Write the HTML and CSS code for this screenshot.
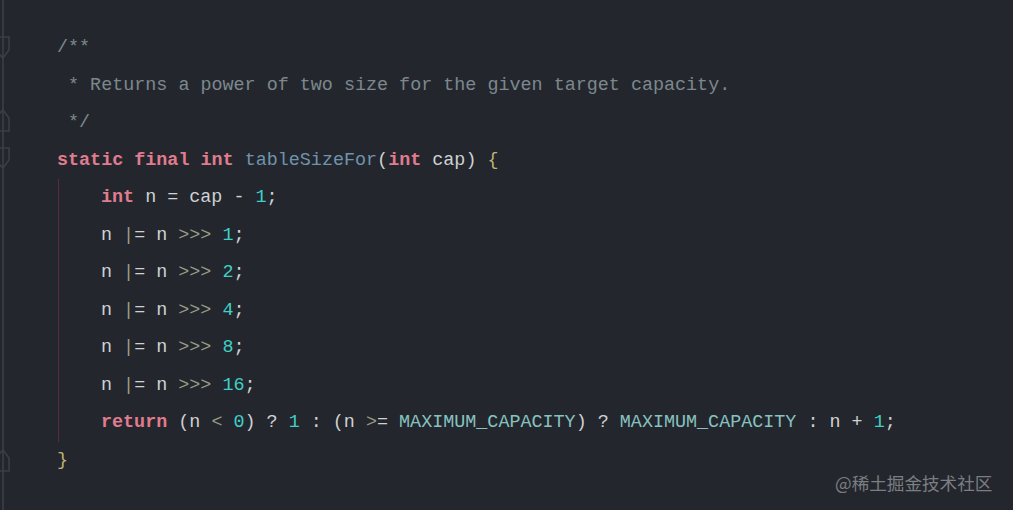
FILE: index.html
```html
<!DOCTYPE html>
<html>
<head>
<meta charset="utf-8">
<link rel="stylesheet" href="styles.css">
</head>
<body>
<div class="editor">
  <div class="gutter">
    <svg width="12" height="510" viewBox="0 0 12 510">
      <g fill="none" stroke="#3a3f47" stroke-width="1.6">
        <line x1="3" y1="0" x2="3" y2="510"/>
        <path d="M-2 37 H9 V50 L3 58 L-2 53"/>
        <path d="M-2 131 H9 V118 L3 110 L-2 115"/>
        <path d="M-2 148 H9 V160 L3 168 L-2 163"/>
        <path d="M-2 471 H9 V458 L3 450 L-2 455"/>
      </g>
    </svg>
  </div>
  <div class="code">
    <div class="line"><span class="cm">/**</span></div>
    <div class="line"><span class="cm"> * Returns a power of two size for the given target capacity.</span></div>
    <div class="line"><span class="cm"> */</span></div>
    <div class="line"><span class="kw">static</span> <span class="kw">final</span> <span class="kw">int</span> <span class="fn">tableSizeFor</span>(<span class="kw">int</span> cap) <span class="br">{</span></div>
    <div class="body">
      <div class="line"><span class="kw">int</span> n = cap - <span class="num">1</span>;</div>
      <div class="line">n <span class="op">|</span>= n <span class="op">&gt;&gt;&gt;</span> <span class="num">1</span>;</div>
      <div class="line">n <span class="op">|</span>= n <span class="op">&gt;&gt;&gt;</span> <span class="num">2</span>;</div>
      <div class="line">n <span class="op">|</span>= n <span class="op">&gt;&gt;&gt;</span> <span class="num">4</span>;</div>
      <div class="line">n <span class="op">|</span>= n <span class="op">&gt;&gt;&gt;</span> <span class="num">8</span>;</div>
      <div class="line">n <span class="op">|</span>= n <span class="op">&gt;&gt;&gt;</span> <span class="num">16</span>;</div>
      <div class="line"><span class="kw">return</span> (n <span class="op">&lt;</span> <span class="num">0</span>) ? <span class="num">1</span> : (n <span class="op">&gt;</span>= <span class="const">MAXIMUM_CAPACITY</span>) ? <span class="const">MAXIMUM_CAPACITY</span> : n + <span class="num">1</span>;</div>
    </div>
    <div class="line"><span class="br">}</span></div>
  </div>
</div>
<div class="watermark">@稀土掘金技术社区</div>
</body>
</html>
```

FILE: styles.css
```css
html, body {
  margin: 0;
  padding: 0;
  background: #23272d;
  width: 1013px;
  height: 510px;
  overflow: hidden;
}

.editor {
  display: flex;
  height: 510px;
}

.gutter {
  width: 12px;
  flex: none;
}

.gutter svg {
  display: block;
}

.code {
  padding-top: 29px;
  padding-left: 45px;
  font-family: "Liberation Mono", "DejaVu Sans Mono", monospace;
  font-size: 18.4px;
  color: #cfd1d3;
}

.line {
  height: 37.55px;
  line-height: 37.55px;
  white-space: pre;
}

.body {
  margin-left: 1px;
  border-left: 1px solid #5a2c3c;
  padding-left: 42px;
}

.cm { color: #7d878d; }
.kw { color: #e07c8e; font-weight: bold; }
.fn { color: #7093ad; }
.num { color: #3fd0c6; }
.const { color: #87c2c0; }
.op { color: #9a9c86; }
.br { color: #bfb274; }

.watermark {
  position: absolute;
  left: 835px;
  top: 470px;
  font-family: "Noto Sans CJK SC", sans-serif;
  font-size: 17.6px;
  color: #7b7e82;
}
```
